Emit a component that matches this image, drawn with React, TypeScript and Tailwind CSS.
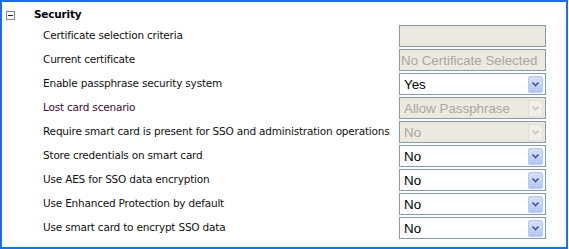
import React from "react";

type Row = {
  label: string;
  kind: "input" | "select";
  value: string;
  disabled?: boolean;
  labelClass?: string;
};

const rows: Row[] = [
  { label: "Certificate selection criteria", kind: "input", value: "", disabled: true },
  { label: "Current certificate", kind: "input", value: "No Certificate Selected", disabled: true },
  { label: "Enable passphrase security system", kind: "select", value: "Yes" },
  { label: "Lost card scenario", kind: "select", value: "Allow Passphrase", disabled: true, labelClass: "text-[#3a0c3a]" },
  { label: "Require smart card is present for SSO and administration operations", kind: "select", value: "No", disabled: true },
  { label: "Store credentials on smart card", kind: "select", value: "No" },
  { label: "Use AES for SSO data encryption", kind: "select", value: "No" },
  { label: "Use Enhanced Protection by default", kind: "select", value: "No" },
  { label: "Use smart card to encrypt SSO data", kind: "select", value: "No" },
];

function Chevron({ disabled }: { disabled?: boolean }) {
  return (
    <svg width="7" height="5" viewBox="0 0 7 5">
      <path
        d="M0.5 0.5 L3.5 3.5 L6.5 0.5"
        fill="none"
        stroke={disabled ? "#c9c7ba" : "#4d6185"}
        strokeWidth="1.6"
      />
    </svg>
  );
}

function Field({ row }: { row: Row }) {
  if (row.kind === "input") {
    return (
      <div className="w-[147px] h-[22px] border border-[#7f9db9] bg-[#ebe9e0] flex items-center pl-[1px] pt-[1px] text-[13.33px] text-[#aca899] leading-none" style={{ fontFamily: '"Liberation Sans", Arial, sans-serif' }}>
        {row.value}
      </div>
    );
  }
  return (
    <div
      className={`w-[147px] h-[22px] border border-[#7f9db9] flex items-center justify-between pl-[4px] pr-[2px] text-[13.33px] leading-none ${
        row.disabled ? "bg-[#ebe9e0] text-[#aca899]" : "bg-white text-black"
      }`}
      style={{ fontFamily: '"Liberation Sans", Arial, sans-serif' }}
    >
      <span className="pt-[2px]">{row.value}</span>
      <div
        className={`w-[15px] h-[17px] rounded-[2px] flex items-center justify-center border ${
          row.disabled
            ? "border-[#e2e0d6] bg-[#f1efe8]"
            : "border-[#b7c9f2] bg-gradient-to-b from-[#d3e0fd] to-[#b3c8f6]"
        }`}
      >
        <Chevron disabled={row.disabled} />
      </div>
    </div>
  );
}

export default function App() {
  return (
    <div
      className="w-[568px] h-[249px] border-2 border-[#1670f4] bg-white"
      style={{ fontFamily: '"DejaVu Sans", Verdana, sans-serif' }}
    >
      <div className="flex items-center h-[23px] pt-[3px]">
        <div className="ml-[4px] w-[9px] h-[9px] border border-[#848284] bg-white flex items-center justify-center">
          <div className="w-[5px] h-[1px] bg-[#222]" />
        </div>
        <div className="ml-[19px] text-[10.5px] font-bold text-black tracking-[-0.2px]">Security</div>
      </div>
      <div className="flex flex-col gap-[2px]">
        {rows.map((r) => (
          <div key={r.label} className="flex items-center h-[22px]">
            <div className={`w-[397px] pl-[41px] text-[10.5px] tracking-[-0.2px] whitespace-nowrap ${r.labelClass ?? "text-[#111]"}`}>
              {r.label}
            </div>
            <Field row={r} />
          </div>
        ))}
      </div>
    </div>
  );
}
